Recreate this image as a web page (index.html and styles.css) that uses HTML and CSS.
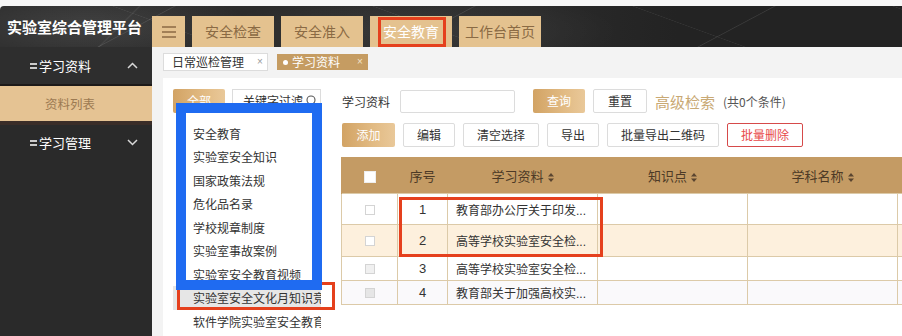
FILE: index.html
```html
<!DOCTYPE html>
<html lang="zh-CN">
<head>
<meta charset="utf-8">
<title>实验室综合管理平台</title>
<link rel="stylesheet" href="styles.css">
</head>
<body>
<div class="page">
  <header class="topbar">
    <div class="brand">实验室综合管理平台</div>
    <nav class="topnav">
      <button class="nav-btn menu-btn" aria-label="菜单">
        <svg width="14" height="12" viewBox="0 0 14 12"><path d="M0 1h14M0 6h14M0 11h14" stroke="#8a6a44" stroke-width="1.6"/></svg>
      </button>
      <button class="nav-btn">安全检查</button>
      <button class="nav-btn">安全准入</button>
      <button class="nav-btn active">安全教育<span class="mark mark-nav"></span></button>
      <button class="nav-btn">工作台首页</button>
    </nav>
  </header>
  <div class="body-row">
    <aside class="sidebar">
      <div class="menu-title first">
        <svg class="m-icon" width="7" height="6" viewBox="0 0 7 6"><path d="M0 1h7M0 5h7" stroke="#fff" stroke-width="1.4"/></svg>
        <span>学习资料</span>
        <svg class="chev" width="11" height="7" viewBox="0 0 11 7"><path d="M1 6l4.5-4.5L10 6" fill="none" stroke="#d8d8d8" stroke-width="1.5"/></svg>
      </div>
      <div class="menu-item">资料列表</div>
      <div class="menu-title">
        <svg class="m-icon" width="7" height="6" viewBox="0 0 7 6"><path d="M0 1h7M0 5h7" stroke="#fff" stroke-width="1.4"/></svg>
        <span>学习管理</span>
        <svg class="chev" width="11" height="7" viewBox="0 0 11 7"><path d="M1 1l4.5 4.5L10 1" fill="none" stroke="#d8d8d8" stroke-width="1.5"/></svg>
      </div>
    </aside>
    <main class="main">
      <div class="tabs">
        <div class="tab">日常巡检管理<span class="tab-x">×</span></div>
        <div class="tab current"><span class="dot"></span>学习资料<span class="tab-x">×</span></div>
      </div>
      <div class="content">
        <section class="filter">
          <div class="filter-top">
            <button class="btn btn-gold all-btn">全部</button>
            <div class="kw">关键字过滤
              <svg class="search" width="11" height="11" viewBox="0 0 11 11"><circle cx="5" cy="5" r="4" fill="none" stroke="#555" stroke-width="1.1"/><path d="M8 8l2.5 2.5" stroke="#555" stroke-width="1.1"/></svg>
            </div>
          </div>
          <ul class="dropdown">
            <li>安全教育</li>
            <li>实验室安全知识</li>
            <li>国家政策法规</li>
            <li>危化品名录</li>
            <li>学校规章制度</li>
            <li>实验室事故案例</li>
            <li>实验室安全教育视频</li>
            <li class="hover">实验室安全文化月知识竞赛</li>
            <li>软件学院实验室安全教育</li>
          </ul>
          <span class="mark mark-item"></span>
          <span class="mark mark-blue"></span>
        </section>
        <section class="panel">
          <div class="form-row">
            <label class="lbl">学习资料</label>
            <input class="inp" type="text">
            <button class="btn btn-gold q-btn">查询</button>
            <button class="btn btn-plain r-btn">重置</button>
            <span class="adv">高级检索</span>
            <span class="cond">(共0个条件)</span>
          </div>
          <div class="tool-row">
            <button class="btn btn-gold">添加</button>
            <button class="btn btn-plain">编辑</button>
            <button class="btn btn-plain">清空选择</button>
            <button class="btn btn-plain">导出</button>
            <button class="btn btn-plain">批量导出二维码</button>
            <button class="btn btn-danger">批量删除</button>
          </div>
          <table class="grid">
            <colgroup>
              <col class="c-chk"><col class="c-no"><col class="c-w"><col class="c-w"><col class="c-w"><col class="c-w">
            </colgroup>
            <thead>
              <tr>
                <th><span class="chk chk-head"></span></th>
                <th>序号</th>
                <th>学习资料<svg class="sort" width="6" height="9" viewBox="0 0 6 9"><path d="M3 0L6 3.4H0zM3 9L0 5.6h6z" fill="#5a4530"/></svg></th>
                <th>知识点<svg class="sort" width="6" height="9" viewBox="0 0 6 9"><path d="M3 0L6 3.4H0zM3 9L0 5.6h6z" fill="#5a4530"/></svg></th>
                <th>学科名称<svg class="sort" width="6" height="9" viewBox="0 0 6 9"><path d="M3 0L6 3.4H0zM3 9L0 5.6h6z" fill="#5a4530"/></svg></th>
                <th></th>
              </tr>
            </thead>
            <tbody>
              <tr class="r-tall"><td><span class="chk"></span></td><td class="num">1</td><td class="txt">教育部办公厅关于印发...</td><td></td><td></td><td></td></tr>
              <tr class="r-tall2 alt"><td><span class="chk"></span></td><td class="num">2</td><td class="txt">高等学校实验室安全检...</td><td></td><td></td><td></td></tr>
              <tr class="r-short"><td><span class="chk chk-g"></span></td><td class="num">3</td><td class="txt">高等学校实验室安全检...</td><td></td><td></td><td></td></tr>
              <tr class="r-short grey"><td><span class="chk chk-g2"></span></td><td class="num">4</td><td class="txt">教育部关于加强高校实...</td><td></td><td></td><td></td></tr>
            </tbody>
          </table>
          <span class="mark mark-table"></span>
        </section>
      </div>
    </main>
  </div>
</div>
</body>
</html>
```

FILE: styles.css
```css
* { box-sizing: border-box; }
html, body { margin: 0; padding: 0; }
body {
  background: #f7f7f7;
  font-family: "Liberation Sans", "Noto Sans CJK SC", sans-serif;
  color: #333;
}
.page {
  width: 902px;
  height: 336px;
  overflow: hidden;
  padding-top: 6px;
  display: flex;
  flex-direction: column;
}
button { font-family: inherit; cursor: pointer; }

/* ---------- header ---------- */
.topbar {
  height: 41px;
  flex: none;
  display: flex;
  border-radius: 4px 0 0 0;
  background-color: #232323;
  background-image:
    linear-gradient(152deg, transparent 46%, rgba(255,255,255,.10) 46.4%, transparent 46.9%),
    linear-gradient(20deg, transparent 60%, rgba(255,255,255,.08) 60.4%, transparent 60.9%),
    linear-gradient(135deg, transparent 30%, rgba(255,255,255,.07) 30.3%, transparent 30.7%),
    radial-gradient(ellipse 160px 40px at 90px 20px, rgba(255,255,255,.10), transparent),
    radial-gradient(ellipse 200px 40px at 420px 25px, rgba(255,255,255,.07), transparent),
    linear-gradient(90deg, #2c2c2c 0, #2a2a2a 60%, #232323 75%, #232323 100%);
  background-size: 300px 41px, 260px 41px, 420px 41px, auto, auto, auto;
  background-repeat: repeat-x, repeat-x, no-repeat, no-repeat, no-repeat, no-repeat;
}
.brand {
  width: 152px;
  flex: none;
  padding-left: 7px;
  color: #fff;
  font-family: "Noto Sans CJK SC", sans-serif;
  font-weight: 700;
  font-size: 15px;
  line-height: 41px;
  letter-spacing: 0;
  white-space: nowrap;
}
.topnav {
  display: flex;
  align-items: flex-end;
  gap: 7px;
}
.nav-btn {
  position: relative;
  width: 82px;
  height: 31px;
  border: none;
  padding: 0;
  background: #e4c28f;
  color: #8a6a44;
  font-family: "Noto Sans CJK SC", sans-serif;
  font-size: 14px;
  line-height: 31px;
}
.nav-btn.active { color: #fff; }
.menu-btn {
  width: 33px;
  display: flex;
  align-items: center;
  justify-content: center;
}

/* annotation marks */
.mark { position: absolute; display: block; pointer-events: none; }
.mark-nav {
  left: 8px; top: 1px; width: 68px; height: 30px;
  border: 3px solid #e5401d;
}

/* ---------- body ---------- */
.body-row {
  flex: 1;
  display: flex;
  min-height: 0;
}
.sidebar {
  width: 152px;
  flex: none;
  background: #2a2a2a;
  font-family: "Noto Sans CJK SC", sans-serif;
}
.menu-title {
  height: 35px;
  display: flex;
  align-items: center;
  padding-left: 30px;
  padding-right: 14px;
  color: #fff;
  font-size: 13px;
}
.menu-title.first {
  height: 39px;
  background: #2e2e2e;
  border-bottom: 2px solid #1d1a19;
}
.menu-title .m-icon { margin-right: 2px; margin-top: 1px; }
.menu-title .chev { margin-left: auto; }
.menu-item {
  height: 39px;
  background: #e5c393;
  color: #9c7a52;
  font-size: 12.5px;
  line-height: 35px;
  padding-left: 45px;
  border-bottom: 4px solid #3a2d28;
}

.main {
  flex: 1;
  min-width: 0;
  background: #f3f3f3;
  padding-left: 11px;
  display: flex;
  flex-direction: column;
}
.tabs {
  display: flex;
  align-items: center;
  height: 18px;
  margin-top: 6px;
  gap: 9px;
}
.tab {
  height: 18px;
  width: 105px;
  background: #fff;
  border: 1px solid #dcdcdc;
  font-family: "Noto Sans CJK SC", sans-serif;
  font-size: 12px;
  line-height: 16px;
  color: #333;
  padding-left: 8px;
  display: flex;
  align-items: center;
}
.tab-x {
  font-family: "Liberation Sans", sans-serif;
  font-size: 10px;
  color: #999;
  margin-left: 13px;
}
.tab.current {
  width: 91px;
  height: 16px;
  border: none;
  background: #c59c62;
  color: #fff;
  padding-left: 6px;
}
.tab.current .tab-x { color: #f3e4cc; margin-left: 17px; }
.dot {
  width: 5px; height: 5px;
  border-radius: 50%;
  background: #fff;
  margin-right: 4px;
}

.content {
  flex: 1;
  margin-top: 7px;
  background: #fff;
  display: flex;
  min-height: 0;
}

/* ---------- filter column ---------- */
.filter {
  position: relative;
  width: 178px;
  flex: none;
  padding: 11px 0 0 10px;
}
.filter-top { display: flex; gap: 7px; }
.btn {
  height: 24px;
  border: 1px solid #dcdcdc;
  border-radius: 2px;
  background: #fff;
  color: #333;
  font-family: "Noto Sans CJK SC", sans-serif;
  font-size: 12px;
  line-height: 22px;
  padding: 0 13px;
  white-space: nowrap;
}
.btn-gold {
  border: none;
  color: #fff;
  background: linear-gradient(90deg, #d2a364 0%, #e2bb84 60%, #e9c899 100%);
}
.all-btn { width: 52px; padding: 0; }
.kw {
  position: relative;
  width: 89px;
  height: 23px;
  border: 1px solid #dcdcdc;
  font-family: "Noto Sans CJK SC", sans-serif;
  font-size: 12px;
  line-height: 21px;
  color: #333;
  padding-left: 10px;
  white-space: nowrap;
  overflow: hidden;
}
.kw .search { position: absolute; right: 3px; top: 5px; }
.dropdown {
  position: absolute;
  left: 10px;
  top: 35px;
  width: 148px;
  height: 240px;
  margin: 0;
  padding: 8.5px 0 0;
  list-style: none;
  background: #fff;
  overflow: hidden;
  font-family: "Noto Sans CJK SC", sans-serif;
  font-size: 12px;
  color: #333;
}
.dropdown li {
  height: 23.5px;
  line-height: 23.5px;
  padding-left: 20px;
  white-space: nowrap;
  overflow: hidden;
}
.dropdown li.hover { background: #e6e6e6; }
.mark-item {
  left: 14px; top: 204px; width: 158px; height: 28px;
  border: 3px solid #e5401d;
}
.mark-blue {
  left: 13px; top: 25px; width: 146px; height: 187px;
  border: 10px solid #1f6bf1;
}

/* ---------- right panel ---------- */
.panel {
  position: relative;
  flex: 1;
  min-width: 0;
  overflow: hidden;
  padding-top: 11px;
}
.form-row {
  display: flex;
  align-items: center;
  height: 24px;
  padding-left: 1px;
  white-space: nowrap;
}
.lbl {
  width: 58px;
  font-family: "Noto Sans CJK SC", sans-serif;
  font-size: 12px;
  color: #333;
}
.inp {
  width: 115px;
  height: 23px;
  border: 1px solid #dcdcdc;
  border-radius: 2px;
  outline: none;
}
.q-btn { width: 52px; padding: 0; margin-left: 18px; }
.r-btn { width: 54px; padding: 0; margin-left: 8px; }
.adv {
  margin-left: 8px;
  font-family: "Noto Sans CJK SC", sans-serif;
  font-size: 15px;
  color: #c9a974;
}
.cond {
  margin-left: 8px;
  font-family: "Noto Sans CJK SC", sans-serif;
  font-size: 12px;
  color: #555;
}
.tool-row {
  display: flex;
  gap: 8px;
  margin-top: 10px;
  padding-left: 1px;
}
.tool-row .btn { height: 24px; }
.tool-row .btn-gold { width: 53px; padding: 0; }
.btn-danger {
  border-color: #d64a4a;
  color: #e84a4a;
}

.grid {
  margin-top: 10px;
  width: 706px;
  table-layout: fixed;
  border-collapse: collapse;
  font-family: "Liberation Sans", "Noto Sans CJK SC", sans-serif;
  font-size: 12px;
  color: #333;
}
.c-chk { width: 56px; }
.c-no { width: 50px; }
.c-w { width: 150px; }
.grid thead tr { height: 36px; }
.grid th {
  background: #c49b64;
  color: #4d3a26;
  font-family: "Noto Sans CJK SC", sans-serif;
  font-size: 13px;
  font-weight: 400;
  text-align: center;
  padding: 0;
  border-top: 1px solid #c49b64;
}
.grid th:first-child { border-left: 1px solid #c49b64; }
.sort { margin-left: 4px; vertical-align: -1px; }
.grid td {
  border: 1px solid #dccaa8;
  padding: 0;
  text-align: center;
  white-space: nowrap;
  overflow: hidden;
}
.grid td.txt {
  text-align: left;
  padding-left: 8px;
}
.grid td.num { font-size: 13px; }
.grid tr.r-tall { height: 31px; }
.grid tr.r-tall2 { height: 32px; }
.grid tr.r-short { height: 24px; }
.grid tr.alt td { background: #fdf0dd; }
.grid tr.grey td { background: #faf9fb; }
.chk {
  display: inline-block;
  width: 10px;
  height: 10px;
  border: 1px solid #d4d4d4;
  background: #fff;
  vertical-align: middle;
}
.chk-head { width: 12px; height: 12px; border-color: #eee; }
.chk-g { background: #f0f0f0; }
.chk-g2 { background: #e6e6e6; }
.mark-table {
  left: 58px; top: 119px; width: 204px; height: 60px;
  border: 3px solid #e5401d;
}
```
